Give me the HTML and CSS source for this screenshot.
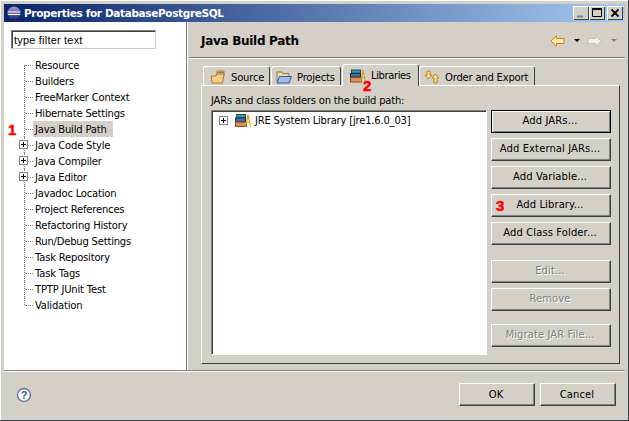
FILE: index.html
```html
<!DOCTYPE html>
<html lang="en">
<head>
<meta charset="utf-8">
<title>Properties for DatabasePostgreSQL</title>
<link rel="stylesheet" href="styles.css">
</head>
<body>
<svg class="defs" width="0" height="0" aria-hidden="true">
  <defs>
    <linearGradient id="globe" x1="0" y1="0" x2="0" y2="1">
      <stop offset="0" stop-color="#a898e0"/>
      <stop offset="1" stop-color="#28246e"/>
    </linearGradient>
  </defs>
  <symbol id="books" viewBox="0 0 16 13">
    <rect x="1.5" y="0.5" width="9" height="3" fill="#35a09a" stroke="#1d4b5c"/>
    <rect x="0.5" y="4" width="10" height="3.500" fill="#3f6ea8" stroke="#1f2f5c"/>
    <rect x="0.5" y="8" width="11" height="4.500" fill="#d98f58" stroke="#8a4f22"/>
    <path d="M10.500 12.500L13 0.500L15.500 12.500M12 8H14.500M12.700 4.500H13.800" fill="none" stroke="#d8a018" stroke-width="1.200"/>
  </symbol>
  <symbol id="plus" viewBox="0 0 9 9">
    <rect x="0.5" y="0.5" width="8" height="8" fill="#fff" stroke="#808080"/>
    <path d="M2 4.500H7M4.500 2V7" stroke="#000"/>
  </symbol>
</svg>
<div class="window">
  <div class="titlebar">
    <svg class="app-icon" viewBox="0 0 14 14"><circle cx="7" cy="7" r="6.500" fill="url(#globe)"/><path d="M0.600 6H13.400M0.800 8.500H13.200" stroke="#fff" stroke-width="1"/></svg>
    <span class="title">Properties for DatabasePostgreSQL</span>
    <div class="win-btns">
      <span class="win-btn"><svg viewBox="0 0 16 14"><path d="M4 10.500H10" stroke="#808080" stroke-width="2"/></svg></span>
      <span class="win-btn"><svg viewBox="0 0 16 14"><path d="M3.500 3.500H12.500V10.500H3.500Z" fill="none" stroke="#000"/><path d="M3 3H13" stroke="#000" stroke-width="2"/></svg></span>
      <span class="win-btn win-close"><svg viewBox="0 0 16 14"><path d="M4.500 3.500L11.500 10.500M11.500 3.500L4.500 10.500" stroke="#000" stroke-width="1.800"/></svg></span>
    </div>
  </div>
  <div class="main">
    <aside class="side">
      <input class="filter" type="text" value="type filter text">
      <ul class="tree">
        <li class="node"><span class="label">Resource</span></li>
        <li class="node"><span class="label">Builders</span></li>
        <li class="node"><span class="label">FreeMarker Context</span></li>
        <li class="node"><span class="label">Hibernate Settings</span></li>
        <li class="node"><span class="label selected">Java Build Path</span></li>
        <li class="node"><svg class="expander"><use href="#plus"/></svg><span class="label">Java Code Style</span></li>
        <li class="node"><svg class="expander"><use href="#plus"/></svg><span class="label">Java Compiler</span></li>
        <li class="node"><svg class="expander"><use href="#plus"/></svg><span class="label">Java Editor</span></li>
        <li class="node"><span class="label">Javadoc Location</span></li>
        <li class="node"><span class="label">Project References</span></li>
        <li class="node"><span class="label">Refactoring History</span></li>
        <li class="node"><span class="label">Run/Debug Settings</span></li>
        <li class="node"><span class="label">Task Repository</span></li>
        <li class="node"><span class="label">Task Tags</span></li>
        <li class="node"><span class="label">TPTP JUnit Test</span></li>
        <li class="node"><span class="label">Validation</span></li>
      </ul>
    </aside>
    <section class="page">
      <header class="page-head">
        <h1 class="page-title">Java Build Path</h1>
        <div class="nav">
          <svg class="nav-arrow" viewBox="0 0 15 12"><path d="M0.800 6L6.500 0.800V3.500H14V8.500H6.500V11.200Z" fill="#fde9a8" stroke="#c08a10"/></svg>
          <span class="caret"></span>
          <svg class="nav-arrow" viewBox="0 0 15 12"><path d="M14.200 6L8.500 0.800V3.500H1V8.500H8.500V11.200Z" fill="#f1f0ec" stroke="#c4c1b9"/></svg>
          <span class="caret caret-off"></span>
        </div>
      </header>
      <div class="tabs-area">
        <div class="tabs">
          <div class="tab tab-source">
            <svg class="tab-icon" viewBox="0 0 16 14"><path d="M1 6H6L7 4H14L12.500 13H2Z" fill="#f3cf85" stroke="#a87a30"/><path d="M7 4V1H14V6M10.500 1V4M7 2.500H14" fill="none" stroke="#a87a30"/></svg>Source
          </div>
          <div class="tab tab-projects">
            <svg class="tab-icon" viewBox="0 0 16 14"><path d="M1 12V2H6L7 3.500H13V6.500" fill="#e8d8a0" stroke="#7f7a50"/><path d="M1 13L3.500 6.500H15.500L13 13Z" fill="#9fbce8" stroke="#3d5c9a"/></svg>Projects
          </div>
          <div class="tab tab-active">
            <svg class="tab-icon"><use href="#books"/></svg>Libraries
          </div>
          <div class="tab tab-order">
            <svg class="tab-icon" viewBox="0 0 16 14"><path d="M3 1H6V5H8L4.500 9L1 5H3Z" fill="#fbe3a0" stroke="#b8800f"/><path d="M10 13V8H8L11.500 4L15 8H13V13Z" fill="#fbe3a0" stroke="#b8800f"/></svg>Order and Export
          </div>
        </div>
        <div class="panel">
          <div class="panel-label">JARs and class folders on the build path:</div>
          <div class="panel-body">
            <div class="list">
              <div class="list-row">
                <svg class="expander-list"><use href="#plus"/></svg>
                <svg class="list-icon"><use href="#books"/></svg>
                <span>JRE System Library [jre1.6.0_03]</span>
              </div>
            </div>
            <div class="actions">
              <button class="btn btn-default">Add JARs...</button>
              <button class="btn">Add External JARs...</button>
              <button class="btn">Add Variable...</button>
              <button class="btn">Add Library...</button>
              <button class="btn">Add Class Folder...</button>
              <button class="btn btn-off gap-edit" disabled>Edit...</button>
              <button class="btn btn-off" disabled>Remove</button>
              <button class="btn btn-off gap-migrate" disabled>Migrate JAR File...</button>
            </div>
          </div>
        </div>
      </div>
    </section>
  </div>
  <footer class="footer">
    <svg class="help" viewBox="0 0 16 16"><circle cx="8" cy="8" r="6.500" fill="#fff" stroke="#5a78a8" stroke-width="1.400"/><text x="8" y="12" text-anchor="middle" class="help-q">?</text></svg>
    <div class="footer-btns">
      <button class="btn btn-foot">OK</button>
      <button class="btn btn-foot">Cancel</button>
    </div>
  </footer>
  <span class="mark mark-1">1</span>
  <span class="mark mark-2">2</span>
  <span class="mark mark-3">3</span>
</div>
</body>
</html>
```
FILE: styles.css
```css
* { box-sizing: border-box; }
html, body { margin: 0; padding: 0; }
body {
  width: 629px;
  height: 421px;
  overflow: hidden;
  background: #d4d0c8;
  font-family: "DejaVu Sans", sans-serif;
  font-size: 10px;
  letter-spacing: -0.200px;
  color: #000;
}
.defs { position: absolute; }
.window {
  position: relative;
  width: 629px;
  height: 421px;
  padding: 3px 3px 0 3px;
  display: flex;
  flex-direction: column;
  background: #d4d0c8;
  border-right: 1px solid #404040;
  border-bottom: 1px solid #404040;
  box-shadow: inset 1px 1px 0 #fff;
}
.titlebar {
  height: 18px;
  margin: 1px 0 0 1px;
  flex: none;
  display: flex;
  align-items: center;
  padding: 0 2px 0 3px;
  background: linear-gradient(90deg, #0a246a, #a6caf0);
  color: #fff;
}
.app-icon { width: 14px; height: 14px; margin-right: 3px; flex: none; }
.title { font-weight: 700; font-size: 10.500px; letter-spacing: -0.350px; flex: 1; white-space: nowrap; }
.win-btns { display: flex; }
.win-btn {
  width: 16px;
  height: 14px;
  background: #d4d0c8;
  box-shadow: inset 1px 1px 0 #fff, inset -1px -1px 0 #404040;
  display: block;
}
.win-btn svg { display: block; width: 16px; height: 14px; }
.win-close { margin-left: 2px; }
.main {
  height: 349px;
  flex: none;
  display: flex;
  margin-left: 1px;
  border-bottom: 1px solid #808080;
  box-shadow: 0 1px 0 #fff;
}
.side {
  width: 183px;
  flex: none;
  background: #fff;
  border-right: 1px solid #808080;
  box-shadow: 1px 0 0 #fff;
  padding: 8px 0 0 7px;
}
.filter {
  display: block;
  width: 145px;
  height: 19px;
  padding: 0 2px;
  margin: 0;
  font: 11px "Liberation Sans", sans-serif;
  letter-spacing: 0.200px;
  color: #000;
  background: #fff;
  border: 1px solid;
  border-color: #808080 #d4d0c8 #d4d0c8 #808080;
  outline: none;
  box-shadow: inset 1px 1px 0 #404040;
}
.tree {
  list-style: none;
  margin: 8px 0 0 0;
  padding: 0 0 0 13px;
}
.node {
  position: relative;
  height: 16px;
  display: flex;
  align-items: center;
  padding-left: 9px;
}
.node::before {
  content: "";
  width: 8px;
  margin-left: -8px;
  flex: none;
  border-top: 1px dotted #808080;
}
.node::after {
  content: "";
  position: absolute;
  left: 0;
  top: 0;
  bottom: 0;
  border-left: 1px dotted #808080;
}
.node:first-child::after { top: 8px; }
.node:last-child::after { bottom: 8px; }
.label { padding: 2px 6px 1px 2px; white-space: nowrap; line-height: 13px; }
.selected { background: #d4d0c8; }
.expander {
  position: absolute;
  left: -5px;
  top: 3px;
  width: 9px;
  height: 9px;
  z-index: 1;
}
.page {
  flex: 1;
  min-width: 0;
  display: flex;
  flex-direction: column;
  padding-left: 2px;
}
.page-head {
  height: 36px;
  flex: none;
  display: flex;
  align-items: center;
  justify-content: space-between;
  padding: 2px 8px 0 12px;
  border-bottom: 1px solid #808080;
  box-shadow: 0 1px 0 #fff;
}
.page-title { margin: 0; font-size: 12px; font-weight: 700; letter-spacing: -0.300px; }
.nav { display: flex; align-items: center; }
.nav-arrow { width: 15px; height: 12px; display: block; }
.caret {
  width: 0;
  height: 0;
  margin: 0 7px 0 9px;
  border-left: 3px solid transparent;
  border-right: 3px solid transparent;
  border-top: 3px solid #000;
}
.caret-off { border-top-color: #808080; margin-right: 0; }
.tabs-area { padding: 6px 5px 0 12px; }
.tabs {
  height: 21px;
  display: flex;
  align-items: flex-end;
  padding-left: 2px;
}
.tab {
  height: 19px;
  display: flex;
  align-items: center;
  padding: 2px 0 0 4px;
  border: 1px solid #fff;
  border-bottom: 0;
  border-right: 1px solid #404040;
  border-radius: 3px 3px 0 0;
  margin-right: 1px;
  white-space: nowrap;
}
.tab-icon { width: 16px; height: 14px; margin-right: 5px; flex: none; }
.tab-source { width: 67px; padding-left: 6px; }
.tab-projects { width: 70px; }
.tab-active {
  width: 77px;
  height: 22px;
  margin: 0 0 -1px 0;
  padding: 0 0 0 7px;
  position: relative;
  z-index: 1;
  background: #d4d0c8;
  letter-spacing: -0.400px;
}
.tab-order { width: 116px; }
.panel {
  height: 279px;
  width: 419px;
  border: 1px solid;
  border-color: #fff #404040 #404040 #fff;
  padding: 8px 9px 0 9px;
}
.panel-label { line-height: 13px; height: 16px; }
.panel-body { display: flex; }
.list {
  width: 276px;
  height: 245px;
  background: #fff;
  border: 1px solid;
  border-color: #808080 #fff #fff #808080;
  box-shadow: inset 1px 1px 0 #404040;
  padding: 1px 0 0 7px;
  flex: none;
}
.list-row { display: flex; align-items: center; height: 16px; }
.expander-list { width: 9px; height: 9px; margin-right: 7px; flex: none; }
.list-icon { width: 16px; height: 13px; margin-right: 4px; flex: none; }
.actions {
  display: flex;
  flex-direction: column;
  margin-left: 4px;
  width: 120px;
  gap: 5px;
}
.btn {
  width: 120px;
  height: 23px;
  padding: 0 2px 2px 0;
  flex: none;
  font: 10px "DejaVu Sans", sans-serif;
  letter-spacing: 0.100px;
  color: #000;
  background: #d4d0c8;
  border: 1px solid;
  border-color: #fff #404040 #404040 #fff;
  box-shadow: inset -1px -1px 0 #808080;
}
.btn-default {
  border-color: #000;
  box-shadow: inset 1px 1px 0 #fff, inset -1px -1px 0 #808080;
}
.btn-off { color: #808080; text-shadow: 1px 1px 0 #fff; }
.gap-edit { margin-top: 10px; }
.gap-migrate { margin-top: 8px; }
.footer {
  flex: 1;
  display: flex;
  align-items: center;
  justify-content: space-between;
  padding: 0 9px 2px 13px;
}
.help { width: 16px; height: 16px; display: block; }
.help-q { font: 700 11px "Liberation Sans", sans-serif; fill: #3c5a8c; }
.footer-btns { display: flex; gap: 5px; }
.btn-foot { width: 76px; padding-bottom: 1px; }
.mark {
  position: absolute;
  font: 700 15px "Liberation Sans", sans-serif;
  letter-spacing: 0;
  color: #f00;
  line-height: 15px;
  -webkit-text-stroke: 0.500px #f00;
  z-index: 2;
}
.mark-1 { left: 8px; top: 122px; }
.mark-2 { left: 363px; top: 78px; }
.mark-3 { left: 496px; top: 198px; }
```
